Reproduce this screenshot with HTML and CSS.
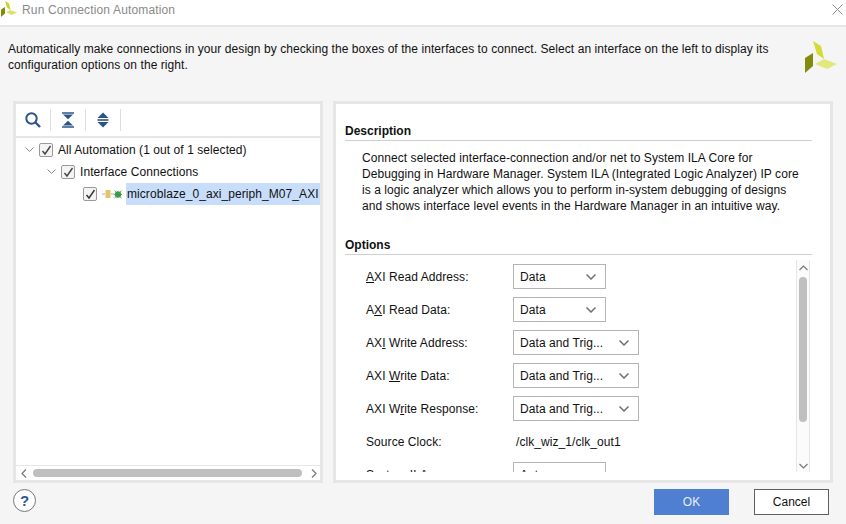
FILE: index.html
```html
<!DOCTYPE html>
<html lang="en">
<head>
    <meta charset="UTF-8">
    <title>Run Connection Automation</title>
    <link rel="stylesheet" href="styles.css">
</head>
<body>
    <header class="title-bar">
        <svg class="title-logo" width="16" height="16" viewBox="0 0 32 32">
            <polygon points="8,0 16,5 19,18 12,13" fill="#c9d41f"/>
            <polygon points="0,17 8,12 8,25 0,32" fill="#838b0c"/>
            <polygon points="10,23 19,18 32,23 22,28" fill="#dbe36a"/>
        </svg>
        <span class="title-text">Run Connection Automation</span>
        <svg class="close-icon" width="11" height="11" viewBox="0 0 11 11">
            <path d="M0.5 0.5L10.5 10.5M10.5 0.5L0.5 10.5" stroke="#8c8c8c" stroke-width="1" fill="none"/>
        </svg>
    </header>

    <section class="intro">
        <p>Automatically make connections in your design by checking the boxes of the interfaces to connect. Select an interface on the left to display its<br>configuration options on the right.</p>
        <svg class="intro-logo" width="32" height="32" viewBox="0 0 32 32">
            <polygon points="8,0 16,5 19,18 12,13" fill="#d3dc36"/>
            <polygon points="0,17 8,12 8,25 0,32" fill="#838b0c"/>
            <polygon points="10,23 19,18 32,23 22,28" fill="#e2e87c"/>
        </svg>
    </section>

    <main class="panels">
        <div class="panel tree-panel">
            <div class="toolbar">
                <svg class="tool" width="18" height="18" viewBox="0 0 18 18">
                    <circle cx="7.5" cy="7.5" r="5.2" stroke="#2c5585" stroke-width="2" fill="none"/>
                    <path d="M11.5 11.5L16 16" stroke="#2c5585" stroke-width="2.4"/>
                </svg>
                <span class="tool-sep"></span>
                <svg class="tool" width="18" height="18" viewBox="0 0 18 18">
                    <path d="M3 2H15M3 16H15" stroke="#2c5585" stroke-width="1.6"/>
                    <path d="M4 3.5H14L9 8.2ZM4 14.5H14L9 9.8Z" fill="#2c5585"/>
                </svg>
                <span class="tool-sep"></span>
                <svg class="tool" width="18" height="18" viewBox="0 0 18 18">
                    <path d="M9 1.5L14.5 7H3.5ZM9 16.5L14.5 11H3.5Z" fill="#2c5585"/>
                    <path d="M3.5 9H14.5" stroke="#2c5585" stroke-width="1.6"/>
                </svg>
                <span class="tool-sep"></span>
            </div>
            <div class="tree">
                <div class="tree-row level-0">
                    <svg class="chevron" width="9" height="6" viewBox="0 0 9 6"><path d="M0.5 0.5L4.5 4.5L8.5 0.5" stroke="#8a8a8a" fill="none"/></svg>
                    <span class="check"><svg width="11" height="11" viewBox="0 0 11 11"><path d="M1.5 6L4 9L9.5 1" stroke="#444" stroke-width="1.4" fill="none"/></svg></span>
                    <span class="tree-label">All Automation (1 out of 1 selected)</span>
                </div>
                <div class="tree-row level-1">
                    <svg class="chevron" width="9" height="6" viewBox="0 0 9 6"><path d="M0.5 0.5L4.5 4.5L8.5 0.5" stroke="#8a8a8a" fill="none"/></svg>
                    <span class="check"><svg width="11" height="11" viewBox="0 0 11 11"><path d="M1.5 6L4 9L9.5 1" stroke="#444" stroke-width="1.4" fill="none"/></svg></span>
                    <span class="tree-label">Interface Connections</span>
                </div>
                <div class="tree-row level-2">
                    <span class="check"><svg width="11" height="11" viewBox="0 0 11 11"><path d="M1.5 6L4 9L9.5 1" stroke="#333" stroke-width="1.4" fill="none"/></svg></span>
                    <svg class="net-icon" width="20" height="10" viewBox="0 0 20 10">
                        <path d="M0 5H12" stroke="#b9b9b9" stroke-width="1.2"/>
                        <rect x="3" y="1" width="6" height="8" fill="#f6e2a6"/>
                        <path d="M5 1V9M7 1V9" stroke="#d9a52e" stroke-width="1"/>
                        <circle cx="16" cy="5.5" r="3.2" fill="#3e9a4a"/>
                        <path d="M12.5 1.5L14.5 3.5M19.5 1.5L17.5 3.5M12 5.5H14M18 5.5H20M12.5 9L14.5 7.5M19.5 9L17.5 7.5" stroke="#3e9a4a" stroke-width="0.8"/>
                    </svg>
                    <span class="tree-label selected">microblaze_0_axi_periph_M07_AXI</span>
                </div>
            </div>
            <div class="h-scroll">
                <svg width="6" height="9" viewBox="0 0 6 9"><path d="M5 0.5L1 4.5L5 8.5" stroke="#777" stroke-width="1.2" fill="none"/></svg>
                <span class="h-thumb"></span>
                <svg width="6" height="9" viewBox="0 0 6 9"><path d="M1 0.5L5 4.5L1 8.5" stroke="#777" stroke-width="1.2" fill="none"/></svg>
            </div>
        </div>

        <div class="panel detail-panel">
            <h2 class="section-title">Description</h2>
            <p class="description">Connect selected interface-connection and/or net to System ILA Core for<br>Debugging in Hardware Manager. System ILA (Integrated Logic Analyzer) IP core<br>is a logic analyzer which allows you to perform in-system debugging of designs<br>and shows interface level events in the Hardware Manager in an intuitive way.</p>
            <h2 class="section-title options-title">Options</h2>
            <div class="options">
                <div class="options-form">
                    <div class="option-row">
                        <span class="option-label"><u>A</u>XI Read Address:</span>
                        <span class="combo"><span>Data</span><svg width="10" height="6" viewBox="0 0 10 6"><path d="M0.5 0.5L5 5L9.5 0.5" stroke="#707070" stroke-width="1.5" fill="none"/></svg></span>
                    </div>
                    <div class="option-row">
                        <span class="option-label">A<u>X</u>I Read Data:</span>
                        <span class="combo"><span>Data</span><svg width="10" height="6" viewBox="0 0 10 6"><path d="M0.5 0.5L5 5L9.5 0.5" stroke="#707070" stroke-width="1.5" fill="none"/></svg></span>
                    </div>
                    <div class="option-row">
                        <span class="option-label">AX<u>I</u> Write Address:</span>
                        <span class="combo wide"><span>Data and Trig...</span><svg width="10" height="6" viewBox="0 0 10 6"><path d="M0.5 0.5L5 5L9.5 0.5" stroke="#707070" stroke-width="1.5" fill="none"/></svg></span>
                    </div>
                    <div class="option-row">
                        <span class="option-label">AXI <u>W</u>rite Data:</span>
                        <span class="combo wide"><span>Data and Trig...</span><svg width="10" height="6" viewBox="0 0 10 6"><path d="M0.5 0.5L5 5L9.5 0.5" stroke="#707070" stroke-width="1.5" fill="none"/></svg></span>
                    </div>
                    <div class="option-row">
                        <span class="option-label">AXI W<u>r</u>ite Response:</span>
                        <span class="combo wide"><span>Data and Trig...</span><svg width="10" height="6" viewBox="0 0 10 6"><path d="M0.5 0.5L5 5L9.5 0.5" stroke="#707070" stroke-width="1.5" fill="none"/></svg></span>
                    </div>
                    <div class="option-row">
                        <span class="option-label">Source Clock:</span>
                        <span class="option-value">/clk_wiz_1/clk_out1</span>
                    </div>
                    <div class="option-row">
                        <span class="option-label">System ILA:</span>
                        <span class="combo"><span>Auto</span><svg width="10" height="6" viewBox="0 0 10 6"><path d="M0.5 0.5L5 5L9.5 0.5" stroke="#707070" stroke-width="1.5" fill="none"/></svg></span>
                    </div>
                </div>
                <div class="v-scroll">
                    <svg width="9" height="6" viewBox="0 0 9 6"><path d="M0.5 5L4.5 1L8.5 5" stroke="#777" stroke-width="1.2" fill="none"/></svg>
                    <span class="v-thumb"></span>
                    <svg width="9" height="6" viewBox="0 0 9 6"><path d="M0.5 1L4.5 5L8.5 1" stroke="#777" stroke-width="1.2" fill="none"/></svg>
                </div>
            </div>
        </div>
    </main>

    <footer class="footer">
        <span class="help">?</span>
        <button class="btn btn-ok">OK</button>
        <button class="btn btn-cancel">Cancel</button>
    </footer>
</body>
</html>
```

FILE: styles.css
```css
html, body {
    margin: 0;
    padding: 0;
}

body {
    width: 846px;
    height: 524px;
    overflow: hidden;
    background-color: #f5f5f5;
    color: #111;
    font-family: "Liberation Sans", Arial, sans-serif;
    font-size: 12px;
    letter-spacing: 0.07px;
}

p {
    margin: 0;
}

/* title bar */
.title-bar {
    display: flex;
    align-items: center;
    box-sizing: border-box;
    height: 27px;
    padding: 0 3px 5px 1px;
    background-color: #fff;
    border-bottom: 2px solid #e6e6e6;
}

.title-logo {
    margin-top: -2px;
    margin-right: 5px;
}

.title-text {
    flex: 1;
    color: #8a8a8a;
    letter-spacing: 0.15px;
}

.close-icon {
    margin-top: -2px;
}

/* intro text */
.intro {
    display: flex;
    justify-content: space-between;
    height: 74px;
    padding: 14px 9px 0 8px;
    box-sizing: border-box;
    line-height: 16px;
}

/* panels */
.panels {
    display: flex;
    gap: 10px;
    height: 382px;
    padding: 0 13px;
}

.panel {
    box-sizing: border-box;
    height: 382px;
    border: 3px solid #e6e6e6;
    background-color: #fff;
}

.tree-panel {
    display: flex;
    flex-direction: column;
    width: 310px;
}

.detail-panel {
    width: 500px;
    padding: 20px 18px 0 9px;
}

.toolbar {
    display: flex;
    align-items: center;
    flex-shrink: 0;
    height: 32px;
    padding-left: 8px;
    border-bottom: 2px solid #e6e6e6;
}

.tool-sep {
    width: 1px;
    height: 22px;
    margin: 0 8px;
    background-color: #dcdcdc;
}

.tree {
    flex: 1;
    padding-top: 1px;
}

.tree-row {
    display: flex;
    align-items: center;
    height: 22px;
}

.level-0 { padding-left: 9px; }
.level-1 { padding-left: 31px; }
.level-2 { padding-left: 67px; }

.chevron {
    margin-right: 5px;
}

.check {
    display: flex;
    align-items: center;
    justify-content: center;
    box-sizing: border-box;
    width: 14px;
    height: 14px;
    border: 1px solid #9a9a9a;
    border-radius: 2px;
    background-color: #f4f4f4;
}

.tree-label {
    margin-left: 5px;
}

.net-icon {
    margin-left: 5px;
}

.tree-label.selected {
    flex: 1;
    margin-left: 4px;
    padding-left: 1px;
    line-height: 22px;
    background-color: #c8ddf9;
    white-space: nowrap;
}

.h-scroll {
    display: flex;
    align-items: center;
    flex-shrink: 0;
    gap: 6px;
    height: 14px;
    padding: 0 3px 0 5px;
    border-top: 1px solid #e6e6e6;
}

.h-thumb {
    flex: 1;
    height: 8px;
    margin-right: 3px;
    border-radius: 4px;
    background-color: #bfbfbf;
}

/* right side */
.section-title {
    margin: 0;
    padding-bottom: 1px;
    font-size: 12px;
    line-height: 15px;
    letter-spacing: 0;
    color: #111;
    border-bottom: 1px solid #cfcfcf;
}

.description {
    padding: 9px 0 0 17px;
    height: 88px;
    box-sizing: border-box;
    line-height: 16px;
}

.options-title {
    margin-top: 9px;
}

.options {
    display: flex;
    height: 212px;
    margin-top: 5px;
    overflow: hidden;
}

.options-form {
    flex: 1;
    padding: 4px 0 0 21px;
}

.option-row {
    display: flex;
    align-items: center;
    height: 25px;
    margin-bottom: 8px;
}

.option-label {
    width: 147px;
    flex-shrink: 0;
}

.option-value {
    padding-left: 3px;
}

.combo {
    display: flex;
    align-items: center;
    justify-content: space-between;
    box-sizing: border-box;
    width: 93px;
    height: 25px;
    padding: 0 9px 0 6px;
    border: 1px solid #b4b4b4;
    background-color: #fff;
}

.combo.wide {
    width: 126px;
}

.v-scroll {
    display: flex;
    flex-direction: column;
    align-items: center;
    flex-shrink: 0;
    box-sizing: border-box;
    width: 14px;
    height: 212px;
    margin-right: 2px;
    padding: 5px 0 3px;
    border: solid #e6e6e6;
    border-width: 0 1px;
    background-color: #fbfbfb;
}

.v-thumb {
    width: 8px;
    height: 145px;
    margin: 6px 0 auto;
    border-radius: 4px;
    background-color: #bfbfbf;
}

/* footer */
.footer {
    display: flex;
    align-items: flex-start;
    padding: 6px 17px 0 13px;
}

.help {
    display: flex;
    align-items: center;
    justify-content: center;
    box-sizing: border-box;
    width: 23px;
    height: 23px;
    margin-right: auto;
    border: 1px solid #777;
    border-radius: 50%;
    background-color: #fff;
    color: #2f5597;
    font-size: 15px;
    font-weight: bold;
}

.btn {
    box-sizing: border-box;
    width: 75px;
    height: 26px;
    padding: 0;
    font-family: inherit;
    font-size: 12px;
    border: 1px solid #5f5f5f;
}

.btn-ok {
    margin-right: 25px;
    border: none;
    background-color: #4f7fd0;
    color: #e8eefa;
}

.btn-cancel {
    background-color: #fff;
    color: #111;
}
```
